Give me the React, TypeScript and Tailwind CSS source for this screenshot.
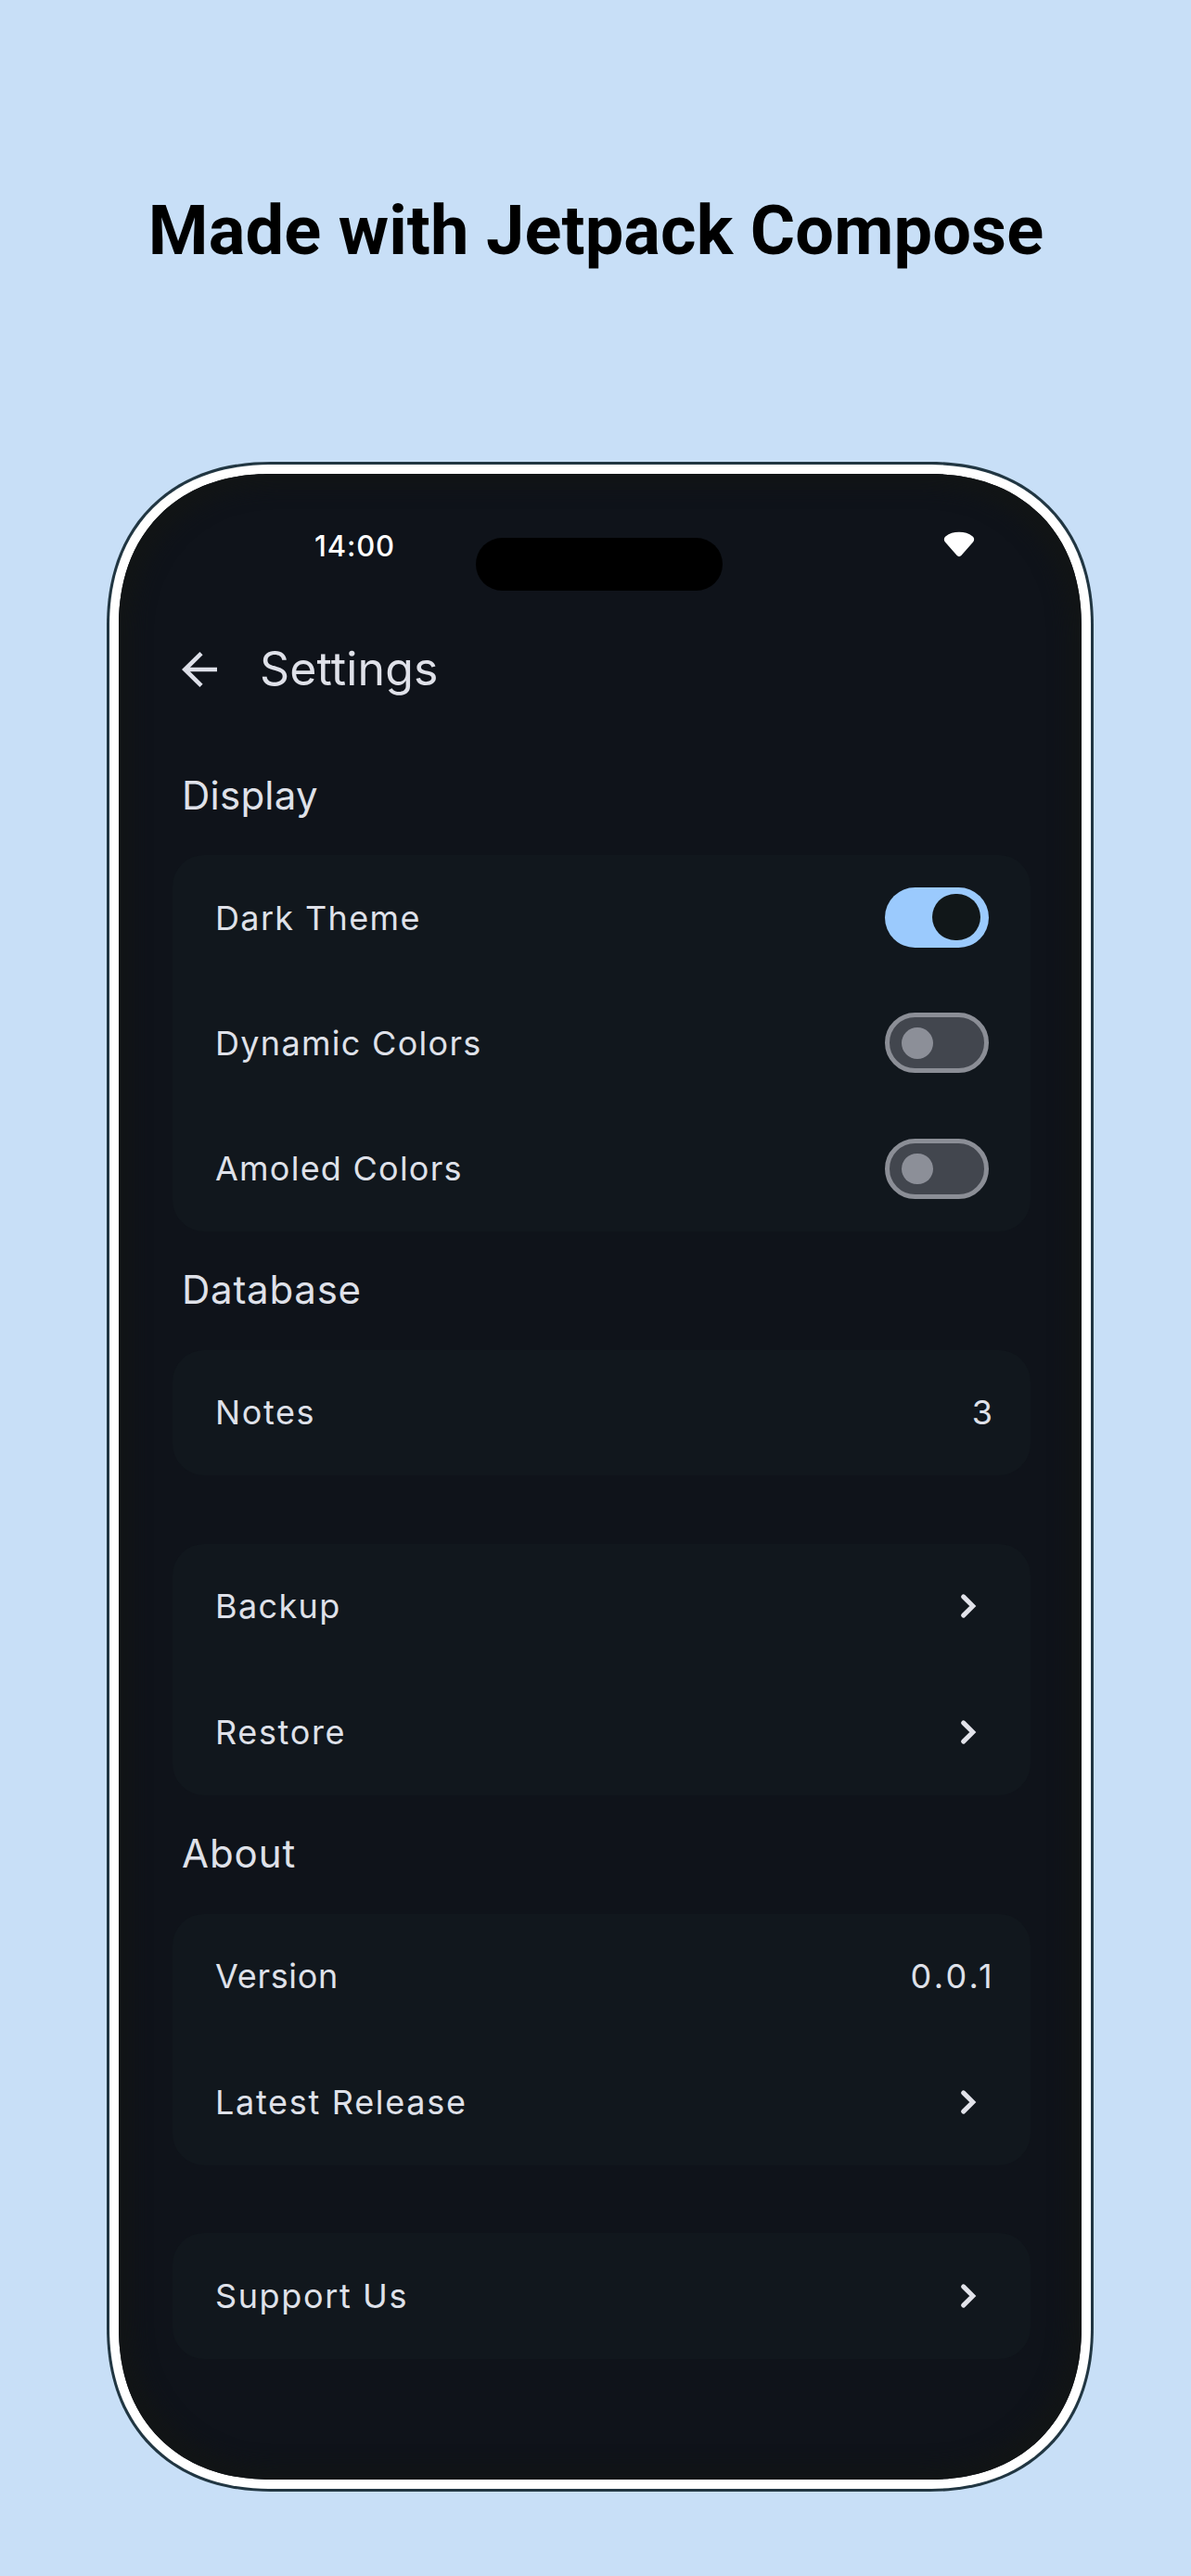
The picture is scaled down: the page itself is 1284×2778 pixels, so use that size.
type RowKind = "on" | "off" | "link" | "value";

interface Row {
  label: string;
  labelClass: string;
  kind: RowKind;
  value?: string;
  valueClass?: string;
}

interface Section {
  title?: string;
  titleClass?: string;
  rows: Row[];
}

const sections: Section[] = [
  {
    title: "Display",
    titleClass: "h-[128px] tracking-[0.25px]",
    rows: [
      { label: "Dark Theme", labelClass: "tracking-[1.35px] pt-px", kind: "on" },
      { label: "Dynamic Colors", labelClass: "tracking-[1.3px]", kind: "off" },
      { label: "Amoled Colors", labelClass: "tracking-[1.24px]", kind: "off" },
    ],
  },
  {
    title: "Database",
    titleClass: "h-[127.5px] pb-[2px] tracking-[0.75px]",
    rows: [
      { label: "Notes", labelClass: "tracking-[1.6px] pb-px", kind: "value", value: "3", valueClass: "mr-[-4px] pb-px" },
    ],
  },
  {
    rows: [
      { label: "Backup", labelClass: "tracking-[1.35px] pb-px", kind: "link" },
      { label: "Restore", labelClass: "tracking-[1.65px]", kind: "link" },
    ],
  },
  {
    title: "About",
    titleClass: "h-[128px] pb-[2px] tracking-[0.95px]",
    rows: [
      { label: "Version", labelClass: "tracking-[0.7px]", kind: "value", value: "0.0.1", valueClass: "tracking-[3.3px] mr-[-7px]" },
      { label: "Latest Release", labelClass: "tracking-[1.7px]", kind: "link" },
    ],
  },
  {
    rows: [{ label: "Support Us", labelClass: "tracking-[1.62px]", kind: "link" }],
  },
];

function Toggle({ on }: { on: boolean }) {
  return on ? (
    <div className="flex h-[65px] w-[112px] items-center justify-end rounded-full bg-[#9bcafd] pr-[9px]">
      <div className="h-[50px] w-[52px] rounded-full bg-[#111719]" />
    </div>
  ) : (
    <div className="flex h-[65px] w-[112px] items-center rounded-full border-[5px] border-[#8b8e96] bg-[#42464e] pl-[13px]">
      <div className="size-[33.5px] rounded-full bg-[#8c8f98]" />
    </div>
  );
}

function Chevron() {
  return (
    <svg className="mr-[13px] h-[28px] w-[18px]" viewBox="0 0 18 28" fill="none" stroke="#e2e3ea" strokeWidth="5" strokeLinecap="round">
      <path d="M3.6 3.9 L13.8 14 L3.6 24.1" strokeLinejoin="miter" />
    </svg>
  );
}

function SettingRow({ row }: { row: Row }) {
  return (
    <div className="flex h-[135.5px] items-center justify-between pl-[46px] pr-[45px] text-[36px]">
      <span className={row.labelClass}>{row.label}</span>
      {row.kind === "on" && <Toggle on />}
      {row.kind === "off" && <Toggle on={false} />}
      {row.kind === "link" && <Chevron />}
      {row.kind === "value" && <span className={row.valueClass}>{row.value}</span>}
    </div>
  );
}

export default function App() {
  return (
    <div className="flex h-[2778px] w-[1284px] flex-col bg-[#c8dff7]">
      <h1 className="flex h-[498px] items-start justify-center pl-px pt-[205px] font-['Roboto',sans-serif] text-[74px] font-bold leading-[87px] tracking-[0.1px] text-black">
        Made with Jetpack Compose
      </h1>

      <div className="ml-[115px] h-[2189px] w-[1064px] rounded-[177px] border-[3px] border-[#213642] bg-white p-[10px] [corner-shape:superellipse(1.14)]">
        <div className="relative h-full w-full overflow-hidden rounded-[164px] bg-[#0f131a] font-['Inter',sans-serif] text-[#dfe1e9] shadow-[inset_0_0_20px_14px_#121516] [corner-shape:superellipse(1.14)]">
          <div className="absolute left-[385px] top-[69px] h-[57px] w-[266px] rounded-full bg-black" />

          <header className="flex h-[153px] items-start justify-between pl-[211px] pr-[115px] pt-[62px] text-white">
            <span className="pt-px text-[31px] font-medium leading-[30px] tracking-[0.85px]">14:00</span>
            <svg className="h-[28px] w-[34px]" viewBox="0 0 36 28" preserveAspectRatio="none" fill="white">
              <path d="M2 11.500 C0.300 9.800 0.600 7 2.500 5.600 C7 2 12 0.800 18 0.800 C24 0.800 29 2 33.500 5.600 C35.400 7 35.700 9.800 34 11.500 L20.500 26 C19.100 27.500 16.900 27.500 15.500 26 Z" />
            </svg>
          </header>

          <div className="flex h-[115px] items-center pl-[67px]">
            <svg className="h-[40px] w-[40px]" viewBox="0 0 40 40" fill="none" stroke="#dddfe8" strokeWidth="4.600">
              <path d="M39 20 H4 M22 2.600 L4.300 20 L22 37.400" />
            </svg>
            <span className="ml-[45px] pb-[2px] text-[50px] leading-[60px] tracking-[0.15px]">Settings</span>
          </div>

          <main className="ml-[58px] mt-[14.5px] w-[925px]">
            {sections.map((section, i) => (
              <section key={i}>
                {section.title ? (
                  <h2 className={`flex items-center pl-[10px] text-[42px] ${section.titleClass}`}>{section.title}</h2>
                ) : (
                  <div className="h-[73.5px]" />
                )}
                <div className="rounded-[34px] bg-[#11171d]">
                  {section.rows.map((row) => (
                    <SettingRow key={row.label} row={row} />
                  ))}
                </div>
              </section>
            ))}
          </main>
        </div>
      </div>
    </div>
  );
}
